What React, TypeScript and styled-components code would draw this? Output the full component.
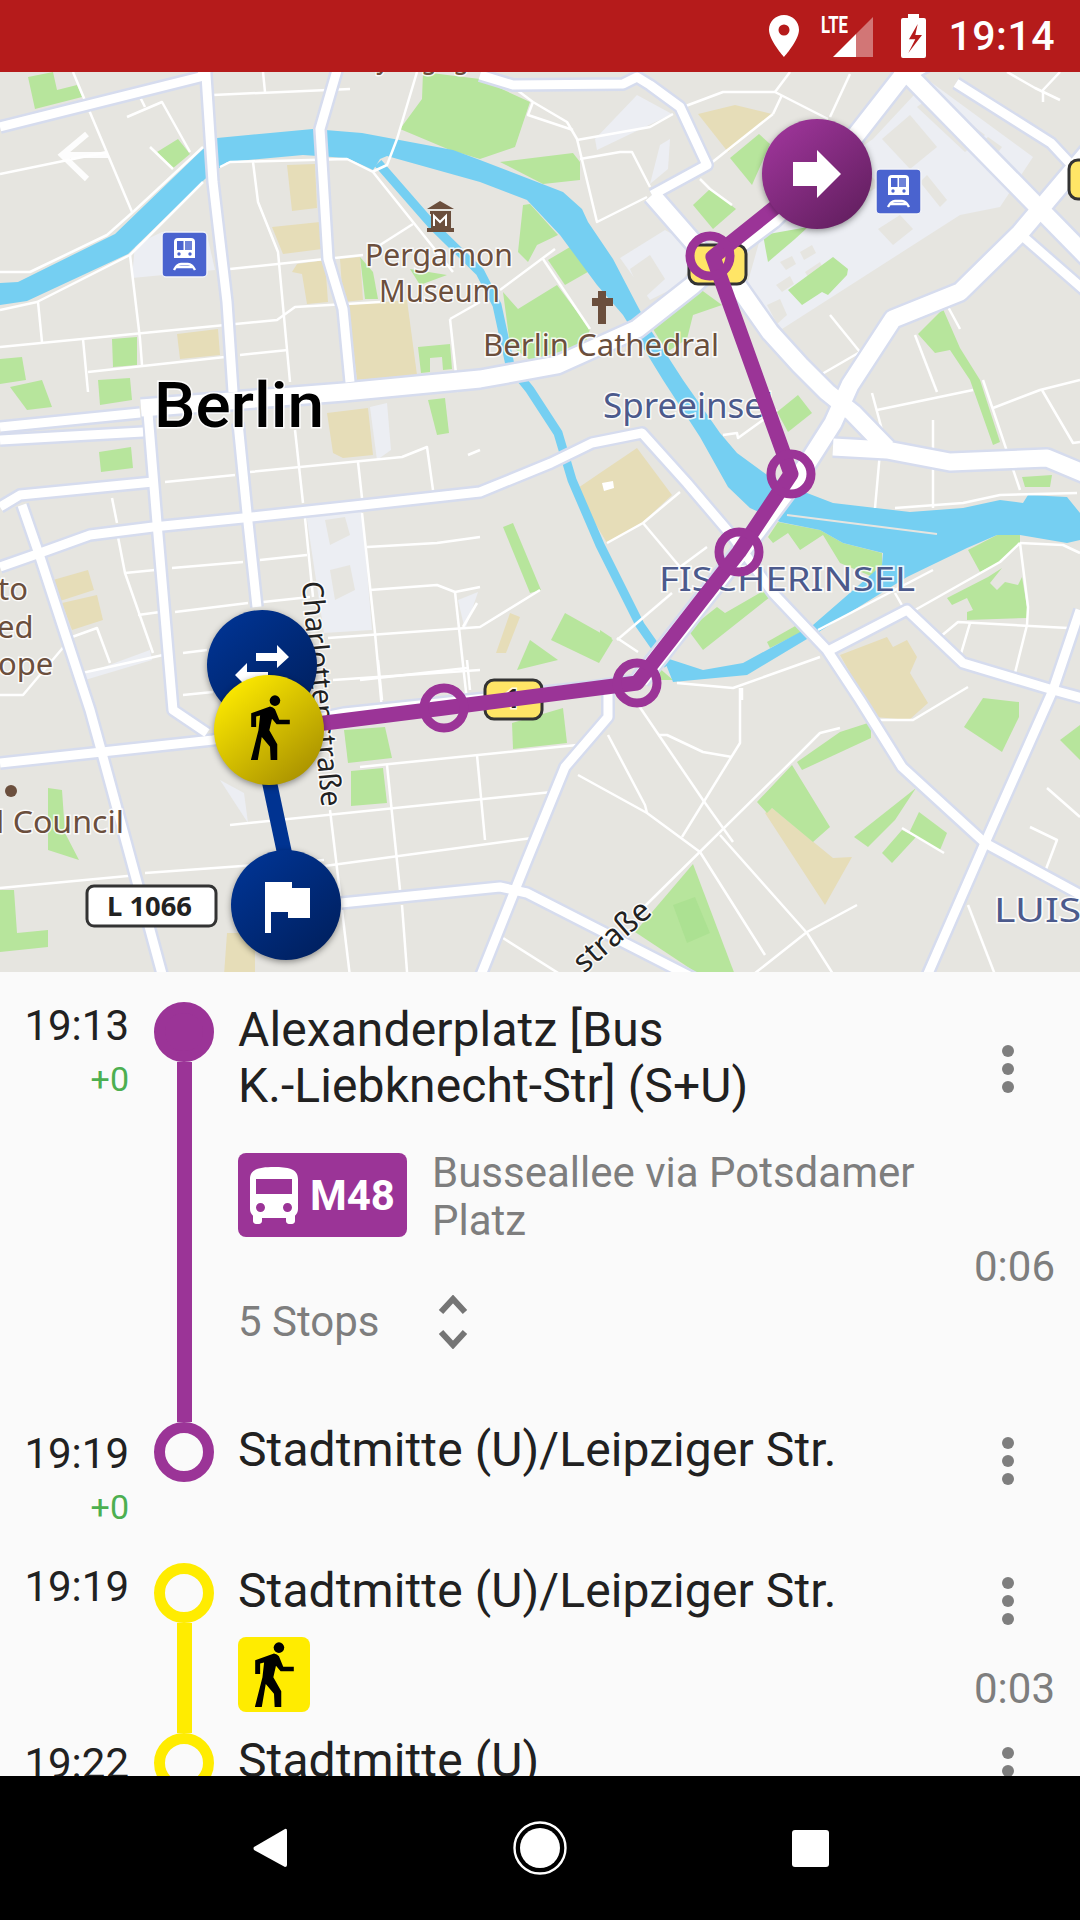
import React from 'react';
import styled, {createGlobalStyle} from 'styled-components';

// -----------------------------------------------------------------------------

const PURPLE = '#9b3497';
const YELLOW = '#ffec00';
const GREY = '#7e7e7e';
const BROWN = '#6b4f3d';
const SLATE = '#4c5a8c';
const WALK_PATH =
  'M213 410V368L270 348Q280 350 285 356L298 388H330V402H290L276 385L268 420L292 462V510H272L270 470L245 440L233 510H212L235 420L240 375L228 378V410Z';
const BUS_PATH =
  'M4 16c0 .88.39 1.67 1 2.22V20c0 .55.45 1 1 1h1c.55 0 1-.45 1-1v-1h8v1c0 .55.45 1 1 1h1c.55 0 1-.45 1-1v-1.78c.61-.55 1-1.34 1-2.22V6c0-3.5-3.58-4-8-4s-8 .5-8 4v10zm3.5 1c-.83 0-1.5-.67-1.5-1.5S6.67 14 7.5 14s1.5.67 1.5 1.5S8.33 17 7.5 17zm9 0c-.83 0-1.5-.67-1.5-1.5s.67-1.5 1.5-1.5 1.5.67 1.5 1.5-.67 1.5-1.5 1.5zm1.5-6H6V6h12v5z';

// -----------------------------------------------------------------------------
// map data, in page coordinates (svg viewBox starts at y=72)
// -----------------------------------------------------------------------------

const MAJOR_ROADS = [
  '141,408 344,392 480,379 557,365 637,329 693,285 733,249 773,219 853,139 903,75 930,60',
  '1090,150 1020,233 960,292 893,319 850,385 833,423 805,467 750,540 640,680',
  '894,60 1090,260',
  '652,195 700,250 737,285 770,332 800,365 827,392 853,413 887,448',
  '833,447 887,450 950,462 1047,458 1090,476'
];

const MEDIUM_ROADS = [
  '0,127 200,77 215,60',
  '205,60 213,182 227,302 233,392',
  '340,60 320,129 328,259 343,309 350,382',
  '0,763 213,740 344,713 592,687 640,680',
  '0,567 40,553 90,535 153,527 243,518 363,505 480,492 551,463 592,443 642,433 687,483 733,537 773,593 827,650 860,700 902,767 985,843 1090,900',
  '0,507 20,495 153,482',
  '0,427 140,413',
  '0,440 143,432',
  '148,413 157,523 173,710 207,733',
  '238,423 247,513 257,607',
  '22,505 40,557 90,710 103,757 165,985',
  '480,75 513,85 623,84 637,77 650,85 680,107 707,165 652,195',
  '1080,610 1053,690 985,843 923,985',
  '830,650 907,610 963,663 1053,690 1090,700',
  '608,693 608,717 565,767 527,860 477,985',
  '341,903 500,887 527,893 707,985',
  '1019,233 1090,295',
  '956,83 1051,143 1090,185'
];

const STREETS = [
  '73,72 97,129 132,212',
  '0,174 107,152',
  '127,117 162,102 190,152',
  '140,97 145,107',
  '150,147 173,169',
  '0,272 30,272 107,235 133,212 203,147',
  '0,310 37,302 130,255 203,182',
  '38,302 42,342',
  '0,347 277,320 295,307 380,302',
  '130,255 140,339 142,365',
  '83,339 88,392',
  '88,372 225,357',
  '240,355 288,350',
  '230,269 363,255',
  '253,162 258,202 278,252 290,382',
  '213,95 350,89',
  '263,72 265,92',
  '220,167 230,162 347,159 373,172 453,272',
  '372,172 387,165 397,139 417,72',
  '380,245 413,224',
  '450,319 480,302',
  '450,319 458,392',
  '513,87 533,102 567,122 577,139 597,222 647,197',
  '533,102 528,115 573,130',
  '577,140 650,127 673,114',
  '580,159 620,152 632,152 650,187',
  '683,107 723,92 775,92 828,119',
  '775,92 790,72',
  '773,114 782,95',
  '830,117 850,74',
  '710,164 773,114',
  '700,179 710,189 732,205',
  '543,259 590,329',
  '500,290 555,249',
  '830,315 860,352 822,374',
  '915,335 937,392',
  '947,305 960,329',
  '1007,72 1035,88 1060,100',
  '1060,72 1043,90 1043,102',
  '872,393 882,430 875,508',
  '877,410 973,390',
  '993,408 1040,390 1080,380',
  '1042,390 1073,443 1080,442',
  '983,380 1020,490',
  '933,420 933,508',
  '895,508 963,503 1000,495 1077,493',
  '1020,543 1063,545 1080,553',
  '1020,543 1028,607 1027,625 1015,673',
  '940,637 958,622 1068,628',
  '970,623 960,657',
  '915,610 1000,562 1020,543',
  '818,630 933,570',
  '895,593 903,607',
  '820,657 733,688 677,683',
  '742,688 742,700',
  '607,543 643,523 680,492',
  '643,523 680,567 707,547',
  '617,640 672,593',
  '617,638 638,652',
  '723,435 737,433 738,438 777,410',
  '165,482 235,475',
  '250,472 402,457 427,447 433,490',
  '295,430 303,503',
  '358,462 362,498',
  '468,455 480,450',
  '112,498 117,523',
  '118,537 125,573 153,653',
  '125,573 155,570',
  '172,568 243,562',
  '260,560 307,555',
  '138,615 160,612',
  '175,612 248,603',
  '263,602 310,597',
  '305,518 313,597',
  '362,513 375,633 382,710',
  '367,547 437,543 480,537',
  '370,590 437,585 455,592 480,587',
  '455,592 468,710',
  '328,638 480,627 540,590',
  '463,627 477,603',
  '333,680 480,670',
  '0,695 23,695 72,637 97,628 110,663',
  '82,673 163,655',
  '183,653 207,650',
  '183,695 213,692',
  '360,680 467,668',
  '378,660 382,700',
  '467,660 470,690',
  '360,767 577,745',
  '477,755 485,840',
  '387,765 400,890',
  '402,905 408,985',
  '230,825 552,792',
  '280,872 532,838',
  '145,873 324,860',
  '0,888 138,875',
  '578,775 647,813 700,852 765,955',
  '608,735 645,805 647,813',
  '637,703 703,800 733,842',
  '658,735 667,735 703,752 732,757',
  '740,688 740,743 682,837',
  '643,908 793,760 820,733 840,728',
  '720,835 807,933 840,985',
  '740,985 807,932 857,905',
  '503,938 577,985',
  '1030,827 1057,840 1043,877',
  '1047,788 1080,817',
  '968,905 999,985',
  '902,828 944,853',
  '330,810 351,985',
  '871,720 913,720 968,687'
];

const RIVER =
  '0,283 18,282 115,234 203,149 217,138 313,129 362,133 453,150 480,160 563,192 582,209 588,222 613,259 637,305 650,329 683,380 720,433 737,453 770,477 807,493 833,503 910,512 963,508 1000,500 1023,503 1028,495 1067,497 1080,513 1080,540 1067,543 1020,535 997,535 967,548 907,577 817,633 747,675 673,682 663,657 703,670 743,663 813,625 882,565 883,553 843,543 820,530 780,522 750,508 728,487 700,437 663,380 623,315 597,285 560,235 527,200 480,182 387,156 380,159 373,170 347,158 303,155 227,162 205,179 128,254 27,301 0,305';

const CANAL =
  '378,163 433,226 480,272 497,305 510,365 530,390 558,433 572,480 600,545 640,625 668,665';

const PARKS = [
  '28,77 53,72 57,90 77,85 82,97 35,109',
  '157,152 178,139 190,154 172,169',
  '423,72 480,79 530,102 515,147 480,159 450,150 400,129 422,99',
  '112,339 137,337 137,365 113,367',
  '0,359 22,357 26,380 0,384',
  '10,387 42,380 52,407 27,410',
  '98,380 130,378 132,400 100,405',
  '99,452 131,447 133,468 101,472',
  '428,400 445,398 449,433 437,435',
  '418,347 450,344 452,369 443,370 442,357 430,358 430,372 421,373',
  '360,257 373,272 378,299 365,299',
  '410,269 447,275 420,285',
  '500,162 573,153 580,162 580,180 543,184',
  '730,158 759,134 770,144 752,185',
  '693,205 710,189 736,209 713,229',
  '763,235 808,227 795,239 768,262',
  '788,290 833,257 848,269 847,275 828,295 822,292 802,305',
  '523,205 530,204 558,235 537,245 528,262 518,252',
  '548,260 570,247 593,269 565,285',
  '503,292 518,309 557,285 590,329 585,345 530,360 510,345',
  '653,329 700,289 722,305 693,315 687,339 667,352',
  '918,334 943,309 960,348 980,380 1000,442 993,445 970,380 950,350 935,353',
  '777,412 798,395 812,413 788,432',
  '1022,477 1052,475 1050,487 1025,487',
  '768,537 778,522 820,530 843,543 882,553 882,567 873,577 840,563 823,535 800,550 788,533 773,543',
  '968,550 997,535 1020,535 1020,543 1000,562 980,572',
  '947,598 988,577 1002,568 990,583 997,590 1005,582 1018,585 1022,577 1027,607 1027,618 967,620 967,612 973,610 967,598 952,605',
  '688,630 717,607 725,613 770,587 770,597 703,650',
  '767,642 797,625 802,632 770,648',
  '658,667 673,680 660,680',
  '600,630 612,638 600,657',
  '503,527 513,523 541,590 530,593',
  '565,613 613,640 599,663 551,640',
  '530,640 558,660 517,670',
  '344,730 385,727 392,758 348,763',
  '351,771 383,768 387,803 351,806',
  '512,723 563,708 567,743 513,749',
  '757,802 792,765 830,827 813,842 772,808 767,813',
  '797,762 840,732 871,722 871,738 802,770',
  '983,698 1019,702 1019,717 1002,752 964,727',
  '854,837 916,788 895,820 868,847',
  '909,833 919,812 947,833 940,850',
  '882,853 902,830 916,837 892,863',
  '635,932 693,864 735,975 700,975',
  '48,788 62,790 65,833 79,860 48,850',
  '0,890 14,890 17,933 48,930 48,947 0,952',
  '1080,725 1080,760 1060,740'
];

const BUILDINGS = [
  '698,114 735,105 772,114 728,152',
  '287,165 315,164 317,208 292,211',
  '272,227 320,222 322,249 283,254',
  '292,272 297,264 325,260 328,302 307,304 302,274',
  '340,259 360,257 363,300 343,302',
  '348,305 407,300 417,375 357,380',
  '177,334 218,329 220,355 180,359',
  '327,413 368,408 373,455 343,458 333,453',
  '600,473 637,448 672,495 643,522 607,543 575,490',
  '53,580 88,570 94,590 60,601',
  '62,603 97,595 103,620 72,630',
  '510,613 520,617 506,653 496,653',
  '840,655 887,637 893,647 907,640 917,657 910,673 928,703 909,720 875,717',
  '772,808 833,858 852,857 825,905 765,813',
  '227,933 255,933 255,975 224,975'
];

const PLAZAS = [
  '760,239 850,155 873,139 928,80 1033,157 1000,207 960,215 782,329 747,285',
  '370,407 387,403 391,450 377,460',
  '306,513 362,512 372,630 324,633',
  '220,780 244,793 248,823',
  '135,245 162,232 207,235 215,270 132,278',
  '620,258 665,230 700,250 680,285 650,300',
  '595,139 637,95 672,114 597,150',
  '660,145 670,139 668,169 650,184',
  '458,600 478,592 465,630',
  '82,675 150,650 152,660 85,680'
];

const PLAZA_BLOCKS = [
  '882,139 910,115 937,147 910,169',
  '917,107 933,95 985,135 965,152',
  '972,150 988,137 1002,147 987,167',
  '878,229 900,215 913,229 893,245',
  '927,175 947,200 940,207 920,182',
  '767,305 780,299 787,315 777,324',
  '630,269 650,255 665,279 643,299',
  '825,200 870,175 880,185 835,215',
  '780,262 792,256 796,264 786,270',
  '800,252 812,245 816,253 804,260',
  '776,285 790,276 794,284 782,292',
  '805,272 820,262 824,270 810,280',
  '325,520 345,517 350,535 330,545',
  '330,570 350,565 355,590 335,600'
];

// -----------------------------------------------------------------------------

const GlobalStyle = createGlobalStyle`
  html, body {
    margin: 0;
    padding: 0;
    background: #000;
    font-family: 'Roboto', 'Liberation Sans', sans-serif;
  }
`;

const Screen = styled.div`
  width: 1080px;
  height: 1920px;
  display: flex;
  flex-direction: column;
  overflow: hidden;
`;

const StatusBar = styled.header`
  height: 72px;
  flex: none;
  display: flex;
  align-items: center;
  justify-content: flex-end;
  gap: 24px;
  padding-right: 25px;
  background: #b51b1b;
`;

const Clock = styled.span`
  margin-left: -2px;
  font-size: 41px;
  font-weight: 500;
  color: #fff;
  letter-spacing: 0.5px;
`;

const StatusIcon = styled.svg`
  display: block;
  flex: none;
`;

const PinIcon = styled(StatusIcon)`
  margin-right: -3px;
`;

const LteText = styled.text`
  font-family: 'Roboto', sans-serif;
  font-size: 23px;
  font-weight: 700;
  fill: #fff;
`;

const MapCanvas = styled.svg`
  display: block;
  flex: none;
  width: 1080px;
  height: 900px;
  background: #e6e5e0;
`;

const RoadCase = styled.polyline<{$w: number}>`
  fill: none;
  stroke: #d6dcee;
  stroke-width: ${p => p.$w + 5}px;
  stroke-linejoin: round;
`;

const RoadFill = styled.polyline<{$w: number}>`
  fill: none;
  stroke: #fff;
  stroke-width: ${p => p.$w}px;
  stroke-linejoin: round;
`;

const Area = styled.polygon<{$color: string}>`
  fill: ${p => p.$color};
`;

const Label = styled.text<{$size: number; $color: string; $weight?: number}>`
  font-family: 'Noto Sans', 'Liberation Sans', sans-serif;
  font-size: ${p => p.$size}px;
  font-weight: ${p => p.$weight ?? 400};
  fill: ${p => p.$color};
  stroke: rgba(255, 255, 255, 0.85);
  stroke-width: 3px;
  paint-order: stroke;
`;

const CityLabel = styled(Label)`
  font-family: 'Roboto', sans-serif;
`;

const Marker = styled.circle`
  filter: drop-shadow(0 2px 3px rgba(0, 0, 0, 0.4));
`;

const TripList = styled.main`
  flex: 1;
  min-height: 0;
  overflow: hidden;
  padding-top: 30px;
  background: #fafafa;
`;

const Leg = styled.section<{$height: number}>`
  display: flex;
  height: ${p => p.$height}px;
  padding-right: 25px;
`;

const TimeColumn = styled.div<{$offset?: number}>`
  width: 129px;
  flex: none;
  padding-top: ${p => p.$offset ?? 0}px;
  text-align: right;
`;

const TimeText = styled.div`
  font-size: 42px;
  line-height: 48px;
  color: #212121;
`;

const DelayText = styled.div`
  margin-top: 5px;
  font-size: 34px;
  line-height: 48px;
  color: #4caf50;
`;

const Rail = styled.div`
  width: 60px;
  flex: none;
  margin-left: 25px;
  display: flex;
  flex-direction: column;
  align-items: center;
`;

const RailNode = styled.div<{$color: string; $filled?: boolean}>`
  width: 60px;
  height: 60px;
  flex: none;
  box-sizing: border-box;
  border-radius: 50%;
  border: 11px solid ${p => p.$color};
  background: ${p => (p.$filled ? p.$color : 'transparent')};
`;

const RailLine = styled.div<{$color: string}>`
  width: 15px;
  flex: 1;
  background: ${p => p.$color};
`;

const Body = styled.div`
  flex: 1;
  min-width: 0;
  margin-left: 24px;
`;

const StopName = styled.div`
  font-size: 48px;
  line-height: 56px;
  letter-spacing: 0.1px;
  color: #212121;
`;

const Transit = styled.div`
  display: flex;
  align-items: flex-start;
  gap: 25px;
  margin-top: 39px;
`;

const LineBadge = styled.div`
  width: 169px;
  height: 84px;
  flex: none;
  box-sizing: border-box;
  padding-left: 12px;
  display: flex;
  align-items: center;
  gap: 12px;
  border-radius: 8px;
  background: ${PURPLE};
  font-size: 42px;
  font-weight: 700;
  color: #fff;
`;

const Direction = styled.div`
  margin-top: -4px;
  font-size: 42px;
  line-height: 48px;
  color: ${GREY};
`;

const StopCount = styled.div`
  display: flex;
  align-items: center;
  gap: 58px;
  margin-top: 50px;
  font-size: 42px;
  line-height: 48px;
  color: ${GREY};
`;

const WalkBadge = styled.div`
  width: 72px;
  height: 75px;
  margin-top: 18px;
  display: flex;
  align-items: center;
  justify-content: center;
  border-radius: 8px;
  background: ${YELLOW};
`;

const Side = styled.div`
  width: 104px;
  flex: none;
  display: flex;
  flex-direction: column;
  align-items: flex-end;
`;

const MoreMenu = styled.div<{$top: number}>`
  display: flex;
  flex-direction: column;
  gap: 6px;
  margin-top: ${p => p.$top}px;
  margin-right: 41px;
`;

const MoreDot = styled.i`
  display: block;
  width: 12px;
  height: 12px;
  border-radius: 50%;
  background: ${GREY};
`;

const Duration = styled.div<{$top: number}>`
  margin-top: ${p => p.$top}px;
  font-size: 42px;
  line-height: 48px;
  color: ${GREY};
`;

const NavBar = styled.nav`
  height: 144px;
  flex: none;
  display: flex;
  justify-content: center;
  background: #000;
`;

const NavSlot = styled.div`
  width: 270px;
  display: flex;
  align-items: center;
  justify-content: center;
`;

// -----------------------------------------------------------------------------

const More = ({top}: {top: number}) => (
  <MoreMenu $top={top}>
    <MoreDot />
    <MoreDot />
    <MoreDot />
  </MoreMenu>
);

const StationIcon = ({x, y}: {x: number; y: number}) => (
  <g transform={`translate(${x} ${y})`}>
    <rect width="45" height="45" rx="4" fill="#4a63cf" stroke="#f2f3f8" strokeWidth="1.5" />
    <path d="M12 10q0-4 4-4h13q4 0 4 4v16H12z" fill="#fff" />
    <rect x="15" y="9" width="6.5" height="9" fill="#4a63cf" />
    <rect x="23" y="9" width="7" height="9" fill="#6f83d8" />
    <path d="M12 38q3-6 7-6h7q4 0 7 6M14 35h17" fill="none" stroke="#fff" strokeWidth="2.4" />
    <circle cx="17" cy="22" r="1.7" fill="#4a63cf" />
    <circle cx="28" cy="22" r="1.7" fill="#4a63cf" />
  </g>
);

const RoadSign = ({x, y, w}: {x: number; y: number; w: number}) => (
  <rect x={x} y={y} width={w} height="39" rx="9" fill="#ffe566" stroke="#333" strokeWidth="3" />
);

const StopRing = ({x, y}: {x: number; y: number}) => (
  <circle cx={x} cy={y} r="20" fill="none" stroke={PURPLE} strokeWidth="9" />
);

const Walker = () => (
  <svg x="250" y="695" width="40" height="65" viewBox="210 313 120 197">
    <circle cx="285" cy="330" r="16" fill="#000" />
    <path d={WALK_PATH} fill="#000" />
  </svg>
);

const MapView = () => (
  <MapCanvas viewBox="0 72 1080 900">
    <defs>
      <linearGradient id="purpleMarker" x1="0.15" y1="0.1" x2="0.85" y2="0.95">
        <stop offset="0" stopColor="#9b3497" />
        <stop offset="1" stopColor="#631f60" />
      </linearGradient>
      <linearGradient id="blueMarker" x1="0.15" y1="0.1" x2="0.85" y2="0.95">
        <stop offset="0" stopColor="#003391" />
        <stop offset="1" stopColor="#00205f" />
      </linearGradient>
      <linearGradient id="yellowMarker" x1="0.15" y1="0.1" x2="0.85" y2="0.95">
        <stop offset="0" stopColor="#fbe800" />
        <stop offset="1" stopColor="#a89000" />
      </linearGradient>
    </defs>

    {PLAZAS.map(points => <Area key={points} points={points} $color="#eceef3" />)}
    {PLAZA_BLOCKS.map(points => <Area key={points} points={points} $color="#e6e5e0" />)}
    {BUILDINGS.map(points => <Area key={points} points={points} $color="#e6ddb8" />)}
    {PARKS.map(points => <Area key={points} points={points} $color="#b7e59c" />)}
    <Area points="673,905 695,897 710,933 687,943" $color="#ace192" />
    <Area points="602,483 613,481 614,488 604,491" $color="#fff" />

    <polyline points={CANAL} fill="none" stroke="#75cff2" strokeWidth="9" />
    <Area points={RIVER} $color="#75cff2" />
    <polyline points="787,515 937,534" fill="none" stroke="#e6e5e0" strokeWidth="2" />

    {STREETS.map(points => <RoadFill key={points} points={points} $w={2.5} />)}
    {MEDIUM_ROADS.map(points => <RoadCase key={points} points={points} $w={9} />)}
    {MAJOR_ROADS.map(points => <RoadCase key={points} points={points} $w={17} />)}
    {MEDIUM_ROADS.map(points => <RoadFill key={points} points={points} $w={9} />)}
    {MAJOR_ROADS.map(points => <RoadFill key={points} points={points} $w={17} />)}

    <StationIcon x={876} y={169} />
    <StationIcon x={162} y={232} />
    <RoadSign x={689} y={245} w={57} />
    <RoadSign x={1069} y={160} w={40} />
    <RoadSign x={485} y={680} w={57} />
    <Label x={505} y={708} $size={26} $weight={700} $color="#222">1</Label>

    <Label x={362} y={68} $size={31} $color={BROWN} textLength={122} lengthAdjust="spacingAndGlyphs">Synagoge</Label>
    <CityLabel x={154} y={427} $size={63} $weight={500} $color="#000" textLength={170} lengthAdjust="spacingAndGlyphs">Berlin</CityLabel>
    <Label x={365} y={266} $size={31} $color={BROWN} textLength={148} lengthAdjust="spacingAndGlyphs">Pergamon</Label>
    <Label x={379} y={302} $size={31} $color={BROWN} textLength={121} lengthAdjust="spacingAndGlyphs">Museum</Label>
    <Label x={483} y={356} $size={31} $color={BROWN} textLength={236} lengthAdjust="spacingAndGlyphs">Berlin Cathedral</Label>
    <Label x={603} y={418} $size={35} $color={SLATE} textLength={170} lengthAdjust="spacingAndGlyphs">Spreeinsel</Label>
    <Label x={659} y={591} $size={32} $color={SLATE} textLength={256} lengthAdjust="spacingAndGlyphs">FISCHERINSEL</Label>
    <Label x={994} y={922} $size={32} $color={SLATE} textLength={110} lengthAdjust="spacingAndGlyphs">LUISE</Label>
    <Label x={-2} y={600} $size={31} $color={BROWN}>to</Label>
    <Label x={-3} y={638} $size={31} $color={BROWN}>ed</Label>
    <Label x={-2} y={675} $size={31} $color={BROWN}>ope</Label>
    <Label x={-4} y={833} $size={31} $color={BROWN} textLength={128} lengthAdjust="spacingAndGlyphs">l Council</Label>
    <circle cx="11" cy="791" r="6" fill={BROWN} />

    <Label transform="translate(302 582) rotate(85)" $size={29} $color="#222" textLength={226} lengthAdjust="spacingAndGlyphs">Charlottenstraße</Label>
    <Label transform="translate(584 974) rotate(-41)" $size={31} $color="#222" textLength={92} lengthAdjust="spacingAndGlyphs">straße</Label>

    <rect x="87" y="886" width="129" height="40" rx="7" fill="#fff" stroke="#333" strokeWidth="3" />
    <Label x={107} y={916} $size={27} $weight={700} $color="#222" textLength={85} lengthAdjust="spacingAndGlyphs">L 1066</Label>

    <path d="M440 201l14 8h-27zM430 211h21v3h-21zM431 214h20v14h-20zM427 228h27v4h-27z" fill={BROWN} />
    <path d="M434 226v-10l6 6 6-6v10" fill="none" stroke="#fff" strokeWidth="2" />
    <path d="M598 291h8v7h7v8h-7v18h-8v-18h-6v-8h6z" fill={BROWN} />

    <path d="M108 155H64M87 134L62 155l25 24" fill="none" stroke="#fff" strokeWidth="6" opacity="0.92" />

    <polyline
      points="817,174 713,257 791,474 739,552 637,683 444,708 269,730"
      fill="none"
      stroke={PURPLE}
      strokeWidth="15"
      strokeLinejoin="round"
    />
    <StopRing x={710} y={256} />
    <StopRing x={791} y={474} />
    <StopRing x={739} y={552} />
    <StopRing x={637} y={683} />
    <StopRing x={444} y={708} />
    <polyline points="269,780 286,860" fill="none" stroke="#003391" strokeWidth="15" />

    <Marker cx={817} cy={174} r={55} fill="url(#purpleMarker)" />
    <polygon points="793,162 817,162 817,150 841,174 817,198 817,186 793,186" fill="#fff" />

    <Marker cx={262} cy={665} r={55} fill="url(#blueMarker)" />
    <polygon points="256,653 277,653 277,645 289,657 277,668 277,661 256,661" fill="#fff" />
    <polygon points="235,675 247,663 247,672 268,672 268,680 247,680 247,687" fill="#fff" />

    <Marker cx={269} cy={730} r={55} fill="url(#yellowMarker)" />
    <Walker />

    <Marker cx={286} cy={905} r={55} fill="url(#blueMarker)" />
    <polygon points="265,882 292,882 292,888 310,888 310,918 288,918 288,912 271,912 271,933 265,933" fill="#fff" />
  </MapCanvas>
);

// -----------------------------------------------------------------------------

const App = () => (
  <Screen>
    <GlobalStyle />

    <StatusBar>
      <PinIcon width="30" height="42" viewBox="0 0 30 42">
        <path
          fillRule="evenodd"
          d="M15 0C6.7 0 0 6.6 0 14.8 0 25.5 15 42 15 42s15-16.5 15-27.2C30 6.6 23.3 0 15 0zm0 9.5a5.5 5.5 0 1 1 0 11 5.5 5.5 0 0 1 0-11z"
          fill="#fff"
        />
      </PinIcon>
      <StatusIcon width="57" height="44" viewBox="0 0 57 44">
        <LteText x="1" y="19" textLength="27" lengthAdjust="spacingAndGlyphs">LTE</LteText>
        <polygon points="13,43 36,20 36,43" fill="#fff" />
        <polygon points="36,20 53,3 53,43 36,43" fill="#fff" opacity="0.4" />
      </StatusIcon>
      <StatusIcon width="25" height="44" viewBox="0 0 25 44">
        <path d="M7 0h11v4h5a2 2 0 0 1 2 2v36a2 2 0 0 1-2 2H2a2 2 0 0 1-2-2V6a2 2 0 0 1 2-2h5z" fill="#fff" />
        <polygon points="16.7,10 8,25.3 14.3,25.3 7.3,39 21,21 14.3,21" fill="#b51b1b" />
      </StatusIcon>
      <Clock>19:14</Clock>
    </StatusBar>

    <MapView />

    <TripList>
      <Leg $height={420}>
        <TimeColumn>
          <TimeText>19:13</TimeText>
          <DelayText>+0</DelayText>
        </TimeColumn>
        <Rail>
          <RailNode $color={PURPLE} $filled />
          <RailLine $color={PURPLE} />
        </Rail>
        <Body>
          <StopName>
            Alexanderplatz [Bus
            <br />
            K.-Liebknecht-Str] (S+U)
          </StopName>
          <Transit>
            <LineBadge>
              <svg width="48" height="57" viewBox="4 2 16 19">
                <path d={BUS_PATH} fill="#fff" />
              </svg>
              M48
            </LineBadge>
            <Direction>Busseallee via Potsdamer Platz</Direction>
          </Transit>
          <StopCount>
            5 Stops
            <svg width="30" height="54" viewBox="0 0 30 54">
              <path d="M3 17L15 4l12 13M3 37l12 13 12-13" fill="none" stroke="#757575" strokeWidth="6" />
            </svg>
          </StopCount>
        </Body>
        <Side>
          <More top={43} />
          <Duration $top={150}>0:06</Duration>
        </Side>
      </Leg>

      <Leg $height={141}>
        <TimeColumn $offset={8}>
          <TimeText>19:19</TimeText>
          <DelayText>+0</DelayText>
        </TimeColumn>
        <Rail>
          <RailNode $color={PURPLE} />
        </Rail>
        <Body>
          <StopName>Stadtmitte (U)/Leipziger Str.</StopName>
        </Body>
        <Side>
          <More top={15} />
        </Side>
      </Leg>

      <Leg $height={170}>
        <TimeColumn>
          <TimeText>19:19</TimeText>
        </TimeColumn>
        <Rail>
          <RailNode $color={YELLOW} />
          <RailLine $color={YELLOW} />
        </Rail>
        <Body>
          <StopName>Stadtmitte (U)/Leipziger Str.</StopName>
          <WalkBadge>
            <svg width="40" height="65" viewBox="210 313 120 197">
              <circle cx="285" cy="330" r="16" fill="#000" />
              <path d={WALK_PATH} fill="#000" />
            </svg>
          </WalkBadge>
        </Body>
        <Side>
          <More top={14} />
          <Duration $top={40}>0:03</Duration>
        </Side>
      </Leg>

      <Leg $height={100}>
        <TimeColumn $offset={7}>
          <TimeText>19:22</TimeText>
        </TimeColumn>
        <Rail>
          <RailNode $color={YELLOW} />
        </Rail>
        <Body>
          <StopName>Stadtmitte (U)</StopName>
        </Body>
        <Side>
          <More top={14} />
        </Side>
      </Leg>
    </TripList>

    <NavBar>
      <NavSlot>
        <svg width="36" height="42" viewBox="0 0 36 42">
          <path d="M33 2q2-1 2 2v34q0 2-2 2L2 23q-1-2 0-3z" fill="#fff" />
        </svg>
      </NavSlot>
      <NavSlot>
        <svg width="56" height="56" viewBox="0 0 56 56">
          <circle cx="28" cy="28" r="25.5" fill="none" stroke="#fff" strokeWidth="2.4" />
          <circle cx="28" cy="28" r="20" fill="#fff" />
        </svg>
      </NavSlot>
      <NavSlot>
        <svg width="37" height="37" viewBox="0 0 37 37">
          <rect width="37" height="37" rx="3" fill="#fff" />
        </svg>
      </NavSlot>
    </NavBar>
  </Screen>
);

// -----------------------------------------------------------------------------

export default App;
